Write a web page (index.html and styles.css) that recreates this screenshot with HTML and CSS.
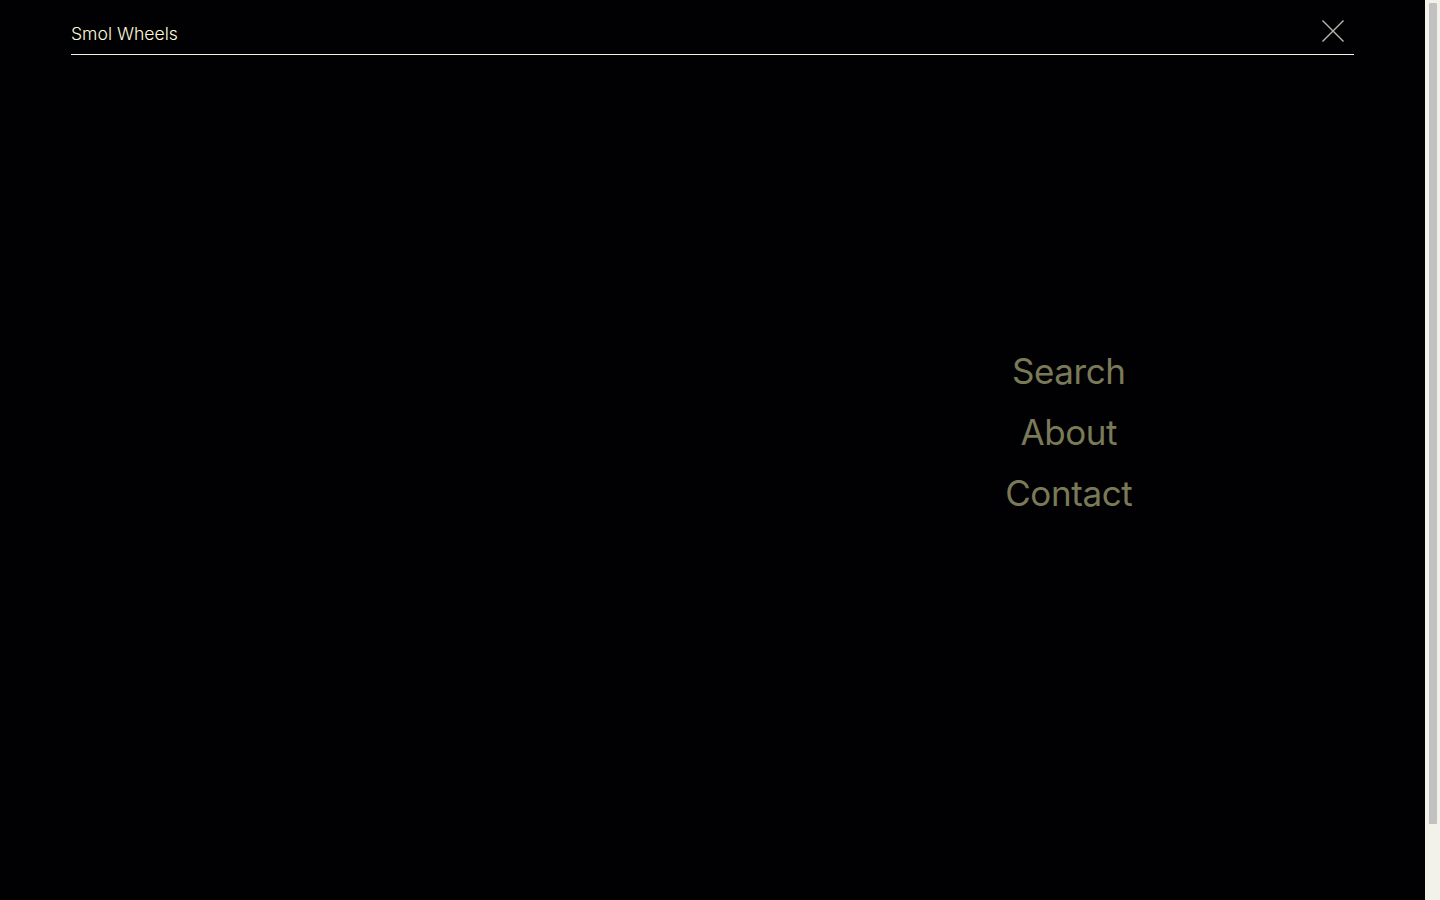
FILE: index.html
```html
<!DOCTYPE html>
<html lang="en">
<head>
<meta charset="utf-8">
<title>Smol Wheels</title>
<link rel="stylesheet" href="styles.css">
</head>
<body>
<div class="window">
  <div class="page">
    <header class="header">
      <div class="header-row">
        <span class="brand">Smol Wheels</span>
        <button class="close" aria-label="Close">
          <svg width="22" height="22" viewBox="0 0 22 22"><path d="M0.5 0.5 L21.5 21.5 M21.5 0.5 L0.5 21.5" stroke="#b9b9b0" stroke-width="1.4" fill="none"/></svg>
        </button>
      </div>
    </header>
    <main class="main">
      <div class="left"></div>
      <nav class="menu">
        <a class="menu-item" href="#">Search</a>
        <a class="menu-item" href="#">About</a>
        <a class="menu-item" href="#">Contact</a>
      </nav>
    </main>
  </div>
  <div class="scrollbar"><div class="thumb"></div></div>
</div>
</body>
</html>
```
FILE: styles.css
```css
html, body {
  margin: 0;
  padding: 0;
  background: #000;
  overflow: hidden;
}
.window {
  display: flex;
  height: 900px;
}
.page {
  flex: 1;
  background: #010103;
}
.scrollbar {
  width: 15px;
  background: #f3f2ea;
  padding: 3px 3px 76px 4px;
  box-sizing: border-box;
  display: flex;
}
.thumb {
  flex: 1;
  background: #c1c1c1;
  border-radius: 1px;
}
.header {
  padding: 0 71px;
}
.header-row {
  height: 54px;
  border-bottom: 1px solid #f4f2e6;
  display: flex;
  align-items: center;
  justify-content: space-between;
}
.brand {
  font-family: "Inter", "Noto Sans", sans-serif;
  font-weight: 300;
  font-size: 17.6px;
  color: #fffbd8;
  padding-top: 12px;
}
.close {
  background: none;
  border: 0;
  padding: 0;
  margin-right: 10px;
  width: 22px;
  height: 22px;
  display: flex;
  margin-top: 8px;
}
.main {
  display: grid;
  grid-template-columns: 1fr 1fr;
  padding-top: 286px;
}
.menu {
  display: flex;
  flex-direction: column;
  align-items: center;
}
.menu-item {
  font-family: "Inter", "Noto Sans", sans-serif;
  font-size: 35px;
  letter-spacing: -0.4px;
  line-height: 61px;
  color: #7a7958;
  text-decoration: none;
}
```
